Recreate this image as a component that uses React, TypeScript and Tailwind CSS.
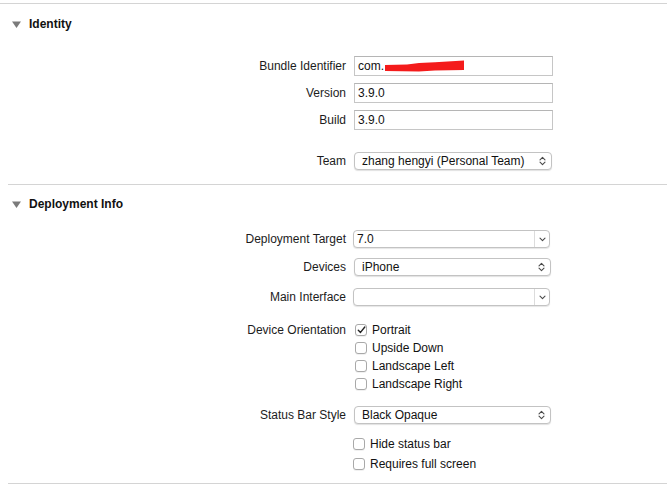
import React from 'react';

const Disclosure = () => (
  <svg width="9" height="7" viewBox="0 0 9 7" className="shrink-0">
    <path d="M0 0.5 L9 0.5 L4.5 7 Z" fill="#7b7b7b" />
  </svg>
);

const UpDown = () => (
  <svg width="7" height="10" viewBox="0 0 7 10">
    <path d="M1 3.8 L3.5 1.3 L6 3.8 M1 6.2 L3.5 8.7 L6 6.2" fill="none" stroke="#4a4a4a" strokeWidth="1.1" strokeLinecap="round" strokeLinejoin="round" />
  </svg>
);

const Down = () => (
  <svg width="7" height="5" viewBox="0 0 7 5">
    <path d="M1 1.2 L3.5 3.7 L6 1.2" fill="none" stroke="#4a4a4a" strokeWidth="1.1" strokeLinecap="round" strokeLinejoin="round" />
  </svg>
);

const SectionHeader = ({ title, className }: { title: string; className?: string }) => (
  <div className={`flex h-[20px] items-center gap-[8px] pl-[12px] ${className ?? ''}`}>
    <Disclosure />
    <span className="text-[12px] font-bold text-[#111]">{title}</span>
  </div>
);

const Row = ({ label, className, children }: { label?: string; className?: string; children: React.ReactNode }) => (
  <div className={`flex items-center ${className ?? ''}`}>
    <div className="w-[346px] shrink-0 text-right text-[12px] text-[#1c1c1c]">{label}</div>
    {children}
  </div>
);

const TextField = ({ value, children }: { value: string; children?: React.ReactNode }) => (
  <div className="ml-[8px] flex h-[20px] w-[199px] items-center border border-[#c6c6c6] border-t-[#b5b5b5] bg-white pl-[3px] text-[12px] text-[#111]">
    <span>{value}</span>
    {children}
  </div>
);

const PopUp = ({ value, width = 198 }: { value: string; width?: number }) => (
  <div
    className="ml-[8px] flex h-[18px] items-center justify-between rounded-[4px] border border-[#c3c3c3] bg-white pl-[7px] pr-[5px] text-[12px] text-[#111] shadow-[0_1px_1px_rgba(0,0,0,0.12)]"
    style={{ width }}
  >
    <span>{value}</span>
    <UpDown />
  </div>
);

const Combo = ({ value }: { value: string }) => (
  <div className="ml-[7px] flex h-[18px] w-[197px] items-stretch rounded-[4px] border border-[#c3c3c3] bg-white text-[12px] text-[#111] shadow-[0_1px_1px_rgba(0,0,0,0.1)]">
    <div className="flex flex-1 items-center pl-[3px]">{value}</div>
    <div className="flex w-[15px] items-center justify-center border-l border-[#dcdcdc]">
      <Down />
    </div>
  </div>
);

const Check = ({ label, checked, className }: { label: string; checked?: boolean; className?: string }) => (
  <div className={`flex h-[18px] items-center gap-[5px] text-[12px] text-[#111] ${className ?? ''}`}>
    <div className="flex h-[12px] w-[12px] items-center justify-center rounded-[3px] border border-[#a9a9a9] bg-white shadow-[0_1px_0_rgba(0,0,0,0.06)]">
      {checked && (
        <svg width="9" height="8" viewBox="0 0 9 8">
          <path d="M1.3 4.2 L3.5 6.4 L7.8 1" fill="none" stroke="#222" strokeWidth="1.4" strokeLinecap="round" strokeLinejoin="round" />
        </svg>
      )}
    </div>
    <span>{label}</span>
  </div>
);

export default function App() {
  return (
    <div className="h-[490px] w-[667px] overflow-hidden bg-white font-['Liberation_Sans',Arial,sans-serif]">
      <div className="mt-[3px] h-px bg-[#d4d4d4]" />

      {/* Identity */}
      <SectionHeader title="Identity" className="mt-[10px]" />
      <div className="mt-[22px] flex flex-col gap-[7px]">
        <Row label="Bundle Identifier">
          <TextField value="com.">
            <svg width="80" height="12" viewBox="0 0 80 12" className="ml-[1px] shrink-0">
              <path d="M0 5 L22 4.5 L34 3 L50 2.2 L79 0.5 L79 10 L50 10.5 L34 11.5 L0 11 Z" fill="#f41b1b" />
            </svg>
          </TextField>
        </Row>
        <Row label="Version">
          <TextField value="3.9.0" />
        </Row>
        <Row label="Build">
          <TextField value="3.9.0" />
        </Row>
      </div>
      <Row label="Team" className="mt-[22px]">
        <PopUp value="zhang hengyi (Personal Team)" />
      </Row>

      <div className="ml-[8px] mt-[14px] h-px bg-[#d4d4d4]" />

      {/* Deployment Info */}
      <SectionHeader title="Deployment Info" className="mt-[9px]" />
      <Row label="Deployment Target" className="mt-[16px]">
        <Combo value="7.0" />
      </Row>
      <Row label="Devices" className="mt-[10px]">
        <PopUp value="iPhone" width={197} />
      </Row>
      <Row label="Main Interface" className="mt-[12px]">
        <Combo value="" />
      </Row>

      <div className="mt-[15px] flex items-start">
        <div className="flex h-[18px] w-[346px] shrink-0 items-center justify-end text-[12px] text-[#1c1c1c]">Device Orientation</div>
        <div className="ml-[9px] flex flex-col">
          <Check label="Portrait" checked />
          <Check label="Upside Down" />
          <Check label="Landscape Left" />
          <Check label="Landscape Right" />
        </div>
      </div>

      <Row label="Status Bar Style" className="mt-[13px]">
        <PopUp value="Black Opaque" width={197} />
      </Row>
      <div className="ml-[353px] mt-[11px] flex flex-col gap-[2px]">
        <Check label="Hide status bar" />
        <Check label="Requires full screen" />
      </div>

      <div className="ml-[8px] mt-[10px] h-px bg-[#d4d4d4]" />
    </div>
  );
}
